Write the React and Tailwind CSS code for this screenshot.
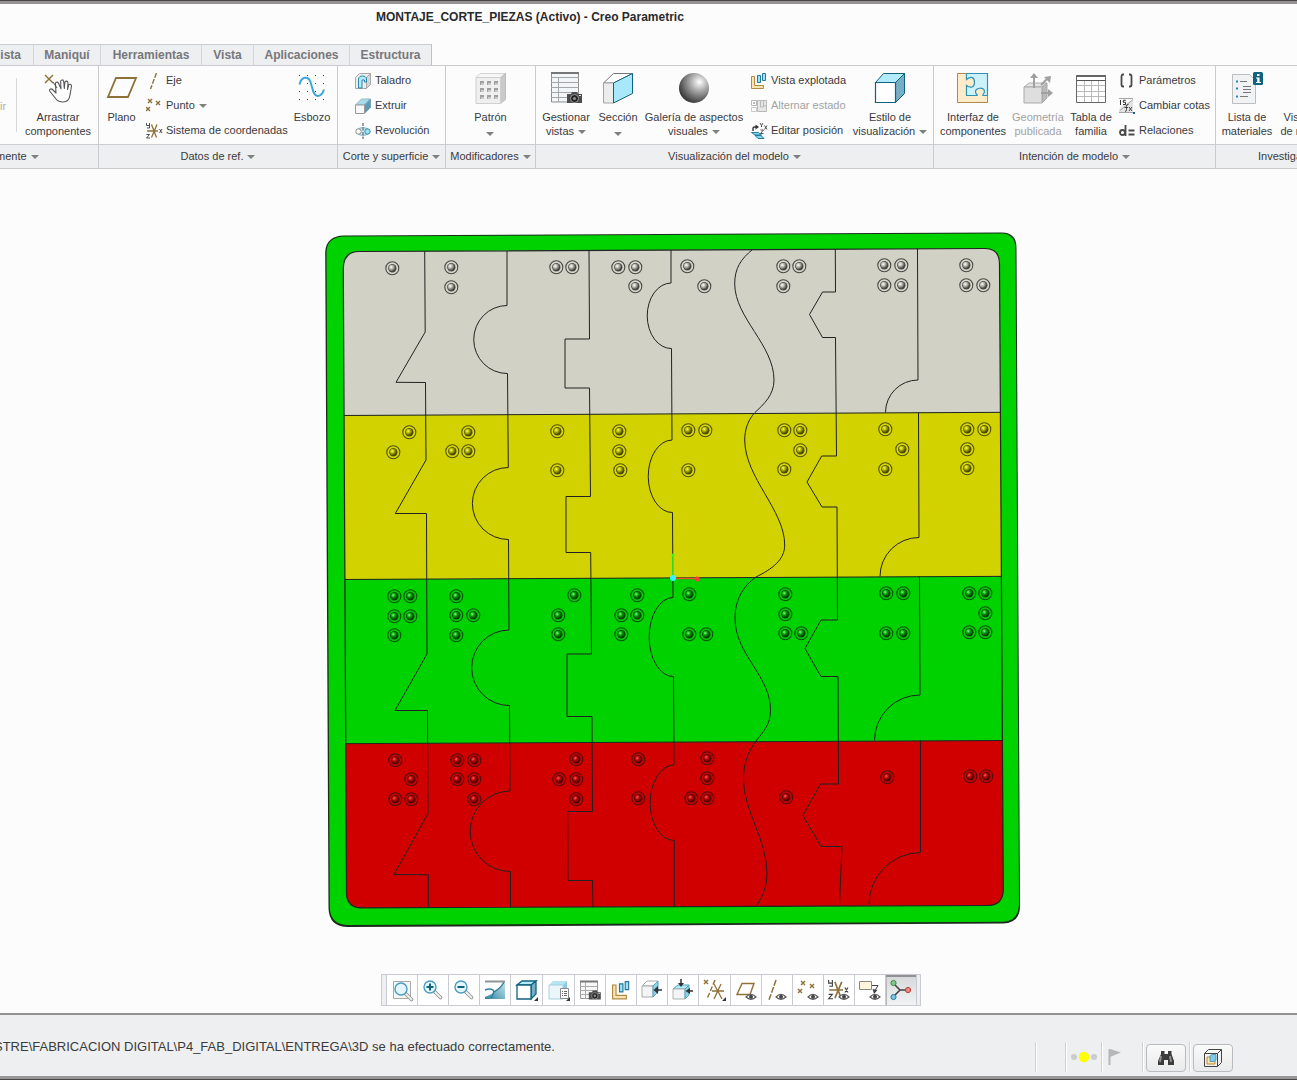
const BROWN = '#8f7038'
const TEAL = '#12627f'

function Icon({ w = 16, h = 16, children, className = 'shrink-0' }) {
  return (
    <svg width={w} height={h} viewBox={`0 0 ${w} ${h}`} fill="none" className={className} aria-hidden="true">
      {children}
    </svg>
  )
}

const Big = ({ children }) => <Icon w={32} h={32}>{children}</Icon>
const Bar = ({ children }) => <Icon w={24} h={24}>{children}</Icon>

function Caret({ className = '' }) {
  return (
    <svg width="8" height="4" viewBox="0 0 8 4" className={`inline-block shrink-0 ${className}`} aria-hidden="true">
      <path d="M0 0h8L4 4z" fill="#808080" />
    </svg>
  )
}

/* shared bits of the icons */
function Camera({ x, y }) {
  return (
    <g transform={`translate(${x} ${y})`}>
      <path d="M0 3h4l1-2h5l1 2h4v9H0z" fill="#4c4c4c" />
      <circle cx="7.500" cy="7.500" r="4" fill="#222" stroke="#9a9a9a" />
      <circle cx="7.500" cy="7.500" r="1.600" fill="#8e8e8e" />
      <path d="M12 4.500h2" stroke="#ddd" />
    </g>
  )
}

function Eye({ x, y }) {
  return (
    <g transform={`translate(${x} ${y})`}>
      <path d="M0 4Q5-1.500 10 4Q5 8.500 0 4z" fill="#fff" stroke="#5a5a5a" strokeWidth="1.200" />
      <circle cx="5" cy="3.700" r="2" fill="#444" />
    </g>
  )
}

function Cross({ x, y, s = 4 }) {
  return <path d={`M${x} ${y}l${s} ${s}m0 -${s}l-${s} ${s}`} stroke={BROWN} strokeWidth="1.400" />
}

function Corner() {
  return <path d="M23 19v4h-4z" fill="#333" />
}

function Axes() {
  return (
    <>
      <path d="M1 8h11M5.500 1.500l5 13M11 1.500l-5.500 13" stroke={BROWN} strokeWidth="1.300" />
      <path d="M.5 0v2.500h3M3.500 0v5H1M.5 11.500h3l-3 3.500h3.500M13.500 6l2.500 4m0-4l-2.500 4" stroke="#3f3f3f" strokeWidth="0.900" />
    </>
  )
}

const DragIcon = () => (
  <Big>
    <Cross x={3} y={3} s={8} />
    <path
      d="M14 21l-3.500-3.500c-1.500-1.500-4 0-2.500 2l6 7.500c2 2.500 4 3 7 3c5 0 6.500-3 7-7l1.500-9c0-2-2.500-2.500-3-.5l-1 4l.5-6.500c0-2.500-3-2.500-3.200 0l-.5 5.500l-.6-7c-.3-2.300-3.200-2-3.100.3l.4 7l-2.500-5.500c-1-2-3.700-1-3 1z"
      fill="#fff" stroke="#555" strokeWidth="1.100" strokeLinejoin="round"
    />
    <path d="M11 10l4 6" stroke="#555" />
  </Big>
)

const PlaneIcon = () => (
  <Big><path d="M10 6h20l-8 19H2z" stroke={BROWN} strokeWidth="1.800" /></Big>
)

const SketchIcon = () => (
  <Big>
    {[3, 11, 19, 27].map(y => (
      <path key={y} d={`M3 ${y}.5h1m7 0h1m7 0h1m7 0h1`} stroke="#333" />
    ))}
    <path d="M3.500 12.500C5 5 12 3 14.500 10S17 23.500 21.500 24Q26 24 28 17.500" stroke="#3ba7d8" strokeWidth="2" />
  </Big>
)

const PatternIcon = () => (
  <Big>
    <path d="M1 5.500l4-4h26l-4 4z" fill="#f6f6f6" stroke="#d2d2d2" />
    <path d="M30.500 1.500v26l-5 4v-26z" fill="#cacaca" stroke="#bdbdbd" />
    <path d="M1 5.500h24.500v26H1z" fill="#efefef" stroke="#cfcfcf" />
    {[9, 16, 23].map(y => <path key={y} d={`M5 ${y + 2}h4m3 0h4m3 0h4`} stroke="#9f9f9f" strokeWidth="4" />)}
    {[9, 16, 23].map(y => <path key={y} d={`M6 ${y + 3}h3m4 0h3m4 0h3`} stroke="#c9c9c9" strokeWidth="2" />)}
  </Big>
)

const ViewsIcon = () => (
  <Big>
    <path d="M1.500 1h27v29h-27z" fill="#f3f6f9" stroke="#8c8c8c" />
    <path d="M1 1h28" stroke="#777" strokeWidth="2" />
    <path d="M1 5.500h28M1 10.500h28M1 15.500h28M1 20.500h28M1 25.500h28M8.500 5v25" stroke="#a5a5a5" />
    <Camera x={17} y={19} />
  </Big>
)

const SectionIcon = () => (
  <Big>
    <path d="M1.500 11l10-9.500h19L11.500 11z" fill="#fff" stroke="#777" />
    <path d="M1.500 11h10v20h-10z" fill="#ececec" stroke="#a5a5a5" />
    <path d="M11.500 11l19-9.500v20L11.500 31z" fill="#a9e8fb" stroke={TEAL} />
  </Big>
)

const SphereIcon = () => (
  <Big>
    <defs>
      <radialGradient id="sphere" cx="0.68" cy="0.3" r="0.72">
        <stop offset="0" stopColor="#fff" />
        <stop offset="0.4" stopColor="#adadad" />
        <stop offset="1" stopColor="#3c3c3c" />
      </radialGradient>
    </defs>
    <circle cx="16" cy="16" r="15" fill="url(#sphere)" />
  </Big>
)

const StyleIcon = () => (
  <Big>
    <path d="M1.500 10.500l8-9h21l-9 9z" fill="#b2ecfb" stroke={TEAL} />
    <path d="M30.500 1.500v20l-9 9v-20z" fill="#76aec6" stroke={TEAL} />
    <path d="M1.500 10.500h20v20h-20z" fill="#fff" stroke={TEAL} strokeWidth="1.200" />
  </Big>
)

const PuzzleIcon = () => (
  <Big>
    <path d="M.5 1.500h30v29H.5z" fill="#fdebc9" />
    <path
      d="M9.500 1.500v6c5-4 8-2 8 3s-4 6-8 3v10h10c2 0 0-1-1-3c-1-5 9-6 9-1c0 2-3 4-1 4h4v-22z"
      fill="#cdf1fb" stroke="#2c93b5" strokeWidth="1.200"
    />
    <path d="M9.500 1.500H.5v29h30v-7" stroke="#b0884a" />
  </Big>
)

const GeometryIcon = () => (
  <Big>
    <path d="M2 15l5-4h18l-5 4z" fill="#e2e2e2" stroke="#b0b0b0" />
    <path d="M20 15l5-4v15l-5 5z" fill="#b9b9b9" stroke="#a6a6a6" />
    <path d="M2 15h18v16H2z" fill="#dedede" stroke="#aaa" />
    <path d="M12 16V5M19 13l7-7M19 21h9" stroke="#a0a0a0" strokeWidth="2" />
    <path d="M8 6l4-5 4 5zM22 5l7-1-1 7zM26 17l5 4-5 4z" fill="#a0a0a0" />
  </Big>
)

const TableIcon = () => (
  <Big>
    <path d="M1.500 3.500h29v27h-29z" fill="#fff" stroke="#666" />
    <path d="M1 4h30" stroke="#666" strokeWidth="2" />
    <path d="M1.500 8.500h29" stroke="#555" />
    <path d="M2 13.500h28M2 19.500h28M2 24.500h28M9.500 9v21M16.500 9v21M23.500 9v21" stroke="#b8b8b8" />
  </Big>
)

const ListIcon = () => (
  <Icon w={34} h={32}>
    <path d="M2.500 2.500h17l6 6v23h-23z" fill="#f1f2f3" stroke="#bdbdbd" />
    <path d="M6 9.500h2M6 16.500h2M6 24.500h2" stroke="#2088b8" strokeWidth="2" />
    <path d="M10 9.500h7M13 14.500h8M13 17.500h8M13 20.500h8M10 24.500h8" stroke="#777" />
    <rect x="23" y="0" width="10" height="13" rx="1.500" fill={TEAL} />
    <path d="M27 2h2.500v2H27zM26 5.500h3.500V10H31v1h-5v-1h1.300V6.500H26z" fill="#fff" />
  </Icon>
)

const AxisIcon = () => <Icon><path d="M10.500 0L4.500 16" stroke={BROWN} strokeWidth="1.400" strokeDasharray="5 1.500" /></Icon>
const PointIcon = () => <Icon><Cross x={2} y={1} /><Cross x={10} y={3} /><Cross x={0} y={9} /></Icon>
const CsysIcon = () => <Icon w={17}><Axes /></Icon>

const HoleIcon = () => (
  <Icon>
    <path d="M.5 4.500l4-4h11v11l-4 4H.5z" fill="#ededed" stroke="#a8a8a8" />
    <path d="M11.500 15.500l4-4V.5l-4 4z" fill="#d5d5d5" stroke="#a8a8a8" />
    <path d="M3.500 15V6c0-4 8-4 8 0v3H9.500V7H7v8z" fill="#b5eafa" stroke="#2a86a8" />
  </Icon>
)

const ExtrudeIcon = () => (
  <Icon>
    <path d="M.5 7l6-6h9l-6 6z" fill="#a5dbec" stroke="#9ab8c2" />
    <path d="M9.500 7l6-6v8.500l-6 6z" fill="#5a9cb8" stroke="#7aa5b5" />
    <path d="M.5 7h9v8.500h-9z" fill="#f8f8f8" stroke="#9a9a9a" />
  </Icon>
)

const RevolveIcon = () => (
  <Icon>
    <path d="M3.500 5.500q4.500-2 9 0v6q-4.500 2-9 0z" fill="#cdeef8" stroke="#7db4c8" />
    <circle cx="3.500" cy="8.500" r="2.700" fill="#fff" stroke="#8a8a8a" />
    <circle cx="12.500" cy="8.500" r="2.700" fill="#9fe2f7" stroke="#3787a5" />
    <path d="M8 0v16" stroke="#444" strokeDasharray="3 1.500" />
  </Icon>
)

const ExplodeShape = () => (
  <>
    <path d="M.5 3.500h3v9h9v3H.500z" fill="#fde3ae" stroke="#b08a45" />
    <path d="M6.500 2.500h3v7h-3zM11.500 .5h3v7h-3z" fill="#9fe2f7" stroke="#23799a" />
  </>
)
const ExplodeIcon = () => <Icon><ExplodeShape /></Icon>

const ToggleIcon = () => (
  <Icon w={17}>
    <path d="M.5 2.500h5v5h-5z" stroke="#b8b8b8" />
    <circle cx="3" cy="5" r="1" fill="#aaa" />
    <path d="M.5 9.500h5v4h-5z" stroke="#c8c8c8" />
    <path d="M6.500 2.500h9v11h-9z" fill="#e6e6e6" stroke="#b8b8b8" />
    <path d="M9.500 3v6h3V3M12.500 8h3" stroke="#b8b8b8" />
  </Icon>
)

const EditPosIcon = () => (
  <Icon w={17}>
    <path d="M.5 9.500h7l3 2.500H4zM4 12.500h6l3 3H7z" fill="#7fd2ec" stroke="#1c7597" strokeWidth="0.900" />
    <path d="M2 8V5.500q0-1.500 1.500-1.500H5" stroke="#333" strokeWidth="1.400" />
    <path d="M4.500 1.500L8 4 4.500 6.500z" fill="#333" />
    <path d="M9 0l1.500 2.500L12 0M10.500 2.500V4M13.500 2.500l2.500 4m0-4l-2.500 4M9.500 7h3L9.500 10.500h3" stroke="#3f3f3f" strokeWidth="0.900" />
  </Icon>
)

const ParamsIcon = () => (
  <Icon>
    <path d="M5 1.500H4q-1.500 0-1.500 2v8q0 2 1.500 2h1M10 1.500h1q1.500 0 1.500 2v8q0 2-1.500 2h-1" stroke="#4a4a4a" strokeWidth="1.800" />
  </Icon>
)

const DimsIcon = () => (
  <Icon>
    <path d="M.5 14.500V10L14 1v13.500z" fill="#e4e4e4" />
    <path d="M.5 13L14 1.500M0 14.500h14M0 .5h14" stroke="#a5a5a5" />
    <path d="M1.500 2v5M4 6.500h2.500V4.300H4.300V2.300h2.500" stroke="#333" />
    <path d="M9.500 6.500q-2-.5-2 2v3q0 2-1.500 2M5.500 9.500h3.500M10 9l3 4m0-4l-3 4" stroke="#333" strokeWidth="0.900" />
    <path d="M14 14h2v2h-2z" fill={TEAL} />
  </Icon>
)

const RelationsIcon = () => (
  <Icon>
    <circle cx="3.500" cy="9.500" r="2.500" stroke="#4a4a4a" strokeWidth="1.800" />
    <path d="M6.500 2v11M9.500 7.500h6M9.500 11.500h6" stroke="#4a4a4a" strokeWidth="1.800" />
  </Icon>
)

/* graphics toolbar icons */
const Lens = ({ x, y, children }) => (
  <g transform={`translate(${x} ${y})`}>
    <path d="M12 12l5.500 5.500" stroke="#8f8f8f" strokeWidth="3.600" strokeLinecap="round" />
    <path d="M12 12l5.500 5.500" stroke="#f2f2f2" strokeWidth="1.800" strokeLinecap="round" />
    <circle cx="7" cy="7" r="6" fill="#e4f6fc" stroke="#4a9cbf" strokeWidth="1.400" />
    {children}
  </g>
)

const FitIcon = () => (
  <Bar>
    <path d="M3.500 3.500h17v17h-17z" fill="#f6f6f6" stroke="#aaa" />
    <Lens x={4} y={4} />
  </Bar>
)
const ZoomInIcon = () => <Bar><Lens x={2} y={2}><path d="M7 3.500v7M3.500 7h7" stroke={TEAL} strokeWidth="2" /></Lens></Bar>
const ZoomOutIcon = () => <Bar><Lens x={2} y={2}><path d="M3.500 7h7" stroke={TEAL} strokeWidth="2" /></Lens></Bar>

const RepaintIcon = () => (
  <Bar>
    <defs>
      <linearGradient id="repaint" x1="0" x2="1" y1="1" y2="0">
        <stop offset="0" stopColor="#2e809f" />
        <stop offset="1" stopColor="#cdeaf4" />
      </linearGradient>
    </defs>
    <path d="M2 3h20v18H2z" fill="url(#repaint)" />
    <path d="M2 4h19C19 9 14 14 2 19z" fill="#fff" />
    <path d="M2 12q5-2 8 0q2 2-2 8" stroke="#2e809f" strokeWidth="1.500" />
    <path d="M21 4Q18 10 11 14" stroke="#2e809f" strokeWidth="1.500" />
    <path d="M2 3.500h20" stroke="#8c9498" strokeWidth="2" />
  </Bar>
)

const BoxIcon = () => (
  <Bar>
    <path d="M2 7l5-4h14l-5 4z" fill="#b2ecfb" stroke={TEAL} strokeWidth="1.300" />
    <path d="M21 3v13l-5 5V7z" fill="#76aec6" stroke={TEAL} strokeWidth="1.300" />
    <path d="M2 7h14v14H2z" fill="#fff" stroke={TEAL} strokeWidth="1.300" />
    <Corner />
  </Bar>
)

const BoxListIcon = () => (
  <Bar>
    <path d="M2 7l4-4h14l-4 4z" fill="#b5e4f2" />
    <path d="M20 3v14l-4 3V7z" fill="#8cc8de" />
    <path d="M2 7h14v14H2z" fill="#eaf6fa" stroke="#a8cfdd" />
    <path d="M13.500 10.500h8v10h-8z" fill="#fff" stroke="#8a8a8a" />
    <path d="M15 13.500h1m1 0h3m-5 2h1m1 0h3m-5 2h1m1 0h3" stroke="#666" />
    <Corner />
  </Bar>
)

const SavedIcon = () => (
  <Bar>
    <path d="M2.500 3.500h17v17h-17z" fill="#f7f7f7" stroke="#999" />
    <path d="M2 3.500h18" stroke="#777" strokeWidth="2" />
    <path d="M2 8.500h18M2 12.500h18M2 16.500h18M7.500 4v17" stroke="#aaa" />
    <g transform="translate(10 11) scale(.8)"><Camera x={1} y={1} /></g>
  </Bar>
)
const ExplodeBarIcon = () => <Bar><g transform="translate(3 3) scale(1.150)"><ExplodeShape /></g></Bar>

const ClipFrontIcon = () => (
  <Bar>
    <path d="M2 8l5-5h11l-5 5z" fill="#fff" stroke="#aaa" />
    <path d="M2 8h11v11H2z" fill="#f4f4f4" stroke="#aaa" />
    <path d="M13 8l5-5v11l-5 5z" fill="#8fd3ea" stroke="#4fa2c0" />
    <path d="M16 12h6" stroke="#333" strokeWidth="1.500" />
    <path d="M18 8v8l-4.500-4z" fill="#333" />
  </Bar>
)
const ClipTopIcon = () => (
  <Bar>
    <path d="M2 11l5-4h11l-4 4z" fill="#b2ecfb" stroke="#4fa2c0" />
    <path d="M2 11h12v10H2z" fill="#f4f4f4" stroke="#b5b5b5" />
    <path d="M14 11l4-4v10l-4 4z" fill="#8fd3ea" stroke="#4fa2c0" />
    <path d="M10 1v5M17 13h5" stroke="#333" strokeWidth="1.500" />
    <path d="M7 5h6l-3 4zM19 10v6l-4.500-3z" fill="#333" />
  </Bar>
)
const DatumIcon = () => (
  <Bar>
    <Cross x={1} y={2} />
    <path d="M12 2L4 21" stroke={BROWN} strokeWidth="1.400" strokeDasharray="5 2" />
    <path d="M9 13h12M11 6l8 15M18 6l-7 15" stroke={BROWN} strokeWidth="1.300" />
    <Corner />
  </Bar>
)
const PlaneEyeIcon = () => <Bar><path d="M8 5.500h12l-4 11H3z" stroke={BROWN} strokeWidth="1.400" /><Eye x={12} y={15} /></Bar>
const AxisEyeIcon = () => (
  <Bar><path d="M11 2L4 22" stroke={BROWN} strokeWidth="1.500" strokeDasharray="6 1.500" /><Eye x={11} y={15} /></Bar>
)
const PointEyeIcon = () => <Bar><Cross x={5} y={3} /><Cross x={14} y={6} /><Cross x={2} y={11} /><Eye x={12} y={15} /></Bar>
const CsysEyeIcon = () => <Bar><g transform="translate(1 2) scale(1.250)"><Axes /></g><Eye x={12} y={15} /></Bar>
const NoteIcon = () => (
  <Bar>
    <path d="M1.500 3.500h12v8h-12z" fill="#fff4dc" stroke="#888" />
    <path d="M14 7.500h6l-3 5" stroke="#444" />
    <path d="M14.500 11l5 1-3.500 4z" fill="#444" />
    <Eye x={12} y={15} />
  </Bar>
)
const SpinIcon = () => (
  <Bar>
    <path d="M4 5l7 7h9M11 12l-7 7" stroke="#444" strokeWidth="1.600" />
    <circle cx="4.500" cy="5" r="2.600" fill="#7fc98a" stroke="#3e8a49" />
    <circle cx="19" cy="12" r="2.600" fill="#f08a80" stroke="#b93a32" />
    <circle cx="4.500" cy="19" r="2.600" fill="#7fc4de" stroke="#2b7b9d" />
  </Bar>
)

const TOOLS = [
  { name: 'Reajustar', icon: FitIcon },
  { name: 'Ampliar', icon: ZoomInIcon },
  { name: 'Reducir', icon: ZoomOutIcon },
  { name: 'Redibujar', icon: RepaintIcon },
  { name: 'Estilo de visualización', icon: BoxIcon, menu: true },
  { name: 'Orientaciones guardadas', icon: BoxListIcon, menu: true },
  { name: 'Gestor de vistas', icon: SavedIcon },
  { name: 'Vista explotada', icon: ExplodeBarIcon },
  { name: 'Recorte frontal', icon: ClipFrontIcon },
  { name: 'Recorte superior', icon: ClipTopIcon },
  { name: 'Filtros de referencias', icon: DatumIcon, menu: true },
  { name: 'Mostrar planos', icon: PlaneEyeIcon },
  { name: 'Mostrar ejes', icon: AxisEyeIcon },
  { name: 'Mostrar puntos', icon: PointEyeIcon },
  { name: 'Mostrar sistemas de coordenadas', icon: CsysEyeIcon },
  { name: 'Mostrar anotaciones', icon: NoteIcon },
  { name: 'Centro de giro', icon: SpinIcon, active: true },
]

const TABS = [
  { label: 'ista', width: 'w-[34px] justify-end pr-3' },
  { label: 'Maniquí', width: 'w-[67px] justify-center' },
  { label: 'Herramientas', width: 'w-[101px] justify-center' },
  { label: 'Vista', width: 'w-[52px] justify-center' },
  { label: 'Aplicaciones', width: 'w-[96px] justify-center' },
  { label: 'Estructura', width: 'w-[82px] justify-center' },
]

function BigButton({ icon: I, lines, menu, width, disabled }) {
  return (
    <button disabled={disabled} className={`flex shrink-0 flex-col items-center pt-1.5 ${width} ${disabled ? 'text-[#a3a3a3]' : ''}`}>
      <I />
      <span className="mt-1.5 block whitespace-nowrap text-center leading-[14px]">
        {lines.map((line, i) => (
          <span key={line} className="block">
            {line}
            {menu && i === 1 && <Caret className="ml-1 align-middle" />}
          </span>
        ))}
        {menu && lines.length === 1 && <Caret className="mx-auto mt-1 block" />}
      </span>
    </button>
  )
}

function SmallButton({ icon: I, label, menu, disabled }) {
  return (
    <button disabled={disabled} className={`flex h-[25px] items-center whitespace-nowrap ${disabled ? 'text-[#a3a3a3]' : ''}`}>
      <span className="flex w-5 shrink-0"><I /></span>
      {label}
      {menu && <Caret className="ml-1" />}
    </button>
  )
}

function SmallColumn({ className = '', children }) {
  return <div className={`flex shrink-0 flex-col items-start pt-0.5 ${className}`}>{children}</div>
}

function Group({ label, width, labelClass = 'justify-center', bodyClass = '', children }) {
  return (
    <section className={`flex flex-col overflow-hidden border-[#c9cbcf] ${width}`}>
      <div className={`flex h-[78px] ${bodyClass}`}>{children}</div>
      <button className={`flex h-6 items-center gap-1 whitespace-nowrap border-t border-[#c9cbcf] bg-[#edeff1] ${labelClass}`}>
        {label}
        <Caret />
      </button>
    </section>
  )
}

const ROWS = [
  {
    id: 'white', light: '#ffffff', mid: '#b4b4a8', dark: '#3a3b36', line: '#2e302b', ring: '#d6d6cc',
    studs: [
      [392, 268], [451, 267], [451, 287], [556, 267], [572, 267], [618, 267], [635, 267], [635, 286],
      [687, 266], [704, 286], [783, 266], [799, 266], [783, 286], [884, 265], [901, 265], [884, 285],
      [901, 285], [966, 265], [966, 285], [983, 285],
    ],
  },
  {
    id: 'yellow', light: '#ffff55', mid: '#b0b000', dark: '#3e3e00', line: '#3a3a0a', ring: '#d8d804',
    studs: [
      [409, 432], [393, 452], [468, 432], [452, 451], [468, 451], [557, 431], [557, 470], [619, 431],
      [619, 451], [620, 470], [688, 430], [705, 430], [688, 470], [784, 430], [800, 430], [800, 450],
      [784, 469], [885, 429], [902, 449], [885, 469], [967, 429], [984, 429], [967, 449], [967, 468],
    ],
  },
  {
    id: 'green', light: '#7dff7d', mid: '#08a008', dark: '#033803', line: '#0a400c', ring: '#04c804',
    studs: [
      [394, 596], [410, 596], [394, 616], [410, 616], [394, 635], [456, 596], [456, 615], [473, 615],
      [456, 635], [574, 595], [558, 615], [558, 634], [637, 595], [621, 615], [637, 615], [621, 634],
      [689, 594], [689, 634], [706, 634], [785, 594], [785, 614], [785, 633], [801, 633], [886, 593],
      [903, 593], [886, 633], [903, 633], [969, 593], [985, 593], [985, 613], [969, 632], [985, 632],
    ],
  },
  {
    id: 'red', light: '#ff5c5c', mid: '#b80404', dark: '#4a0303', line: '#3c1010', ring: '#c40303',
    studs: [
      [395, 760], [411, 779], [395, 799], [411, 799], [457, 760], [474, 760], [457, 779], [474, 779],
      [474, 799], [576, 759], [559, 779], [576, 779], [576, 799], [638, 759], [638, 798], [707, 758],
      [707, 778], [691, 798], [707, 798], [786, 797], [887, 777], [970, 776], [986, 776],
    ],
  },
]

const CUTS = [
  'M424.700 251L425.200 332L396 382.300L425.500 382.500L426 460L395.300 513.500H426.500L427 654L395 710.500H427.500L428 813.500L394 874.500L428.300 874.800V907',
  'M507 251V305.500A33.500 34 0 0 0 507.500 373.500L508.300 467.500A36 36 0 0 0 508.500 539.500L509 630A37.500 37.700 0 0 0 509.500 705.500L510 791A40 40.200 0 0 0 510.500 871.500V907',
  'M589 250L589.500 339H565V388H589.500L590.500 496.500H566V552.500H590.700L591.500 654H567V716.500H592L592.500 811.500H567.700L568 880.500H592.500L593 907',
  'M671 250V283A24 32.700 0 0 0 671.500 348.500L672 440A24 36.200 0 0 0 672.500 512.500L673 597.500A24 39.400 0 0 0 673.500 676.500L674 765A24 37.700 0 0 0 674.300 840.500V906',
  'M752.500 249.500C741 259 734.700 268 734.700 284C735 318 774 345 774 380C774 395 764 404 754.500 413C748 420 744.700 430 744.700 440C745 478 784.700 510 784.700 545C784.700 560 772 569 756 577C743 586 735 600 735 618C735 655 770.500 675 770.500 710C770.500 725 763 732 756 741C748 752 743.500 763 743.500 780C743.500 810 767 840 767 873C767 888 762 897 757 905',
  'M835.300 249L835.500 292H822.500L809.500 314.500L822.500 337.500H835.500L836.500 456H821.700L807 482L822 507H837L837.500 620H821L805 648.500L821 676.500H838L838.500 784H820.500L803 815.500L821 846.500H842L839.500 904',
  'M917.500 248.500L918 380A32.500 32.500 0 0 0 885.500 412.500M918.500 412.500L919 537.500A39 39 0 0 0 880 576.500M919.500 576.500L920 695A45.500 45.500 0 0 0 874.500 740.500M920.500 740.500V852.500A52 52 0 0 0 869 904.500',
]

const PLATE = 'M343.300 269Q343.300 251.500 359 251.500L985 248.500Q999.500 248.500 999.500 264L1003.300 889Q1003.300 905.300 988 905.500L362 907.800Q346.700 907.800 346.500 893Z'

function Board() {
  return (
    <svg viewBox="320 225 705 710" width="705" height="710" className="shrink-0" role="img" aria-label="Montaje">
      <defs>
        <clipPath id="plate"><path d={PLATE} /></clipPath>
        {ROWS.map(r => (
          <radialGradient key={r.id} id={`stud-${r.id}`} cx="0.36" cy="0.34" r="0.68">
            <stop offset="0" stopColor={r.light} />
            <stop offset="0.45" stopColor={r.mid} />
            <stop offset="1" stopColor={r.dark} />
          </radialGradient>
        ))}
      </defs>
      {/* frame, with its dark lower edge behind */}
      <path d="M325.200 252Q326 236 344 235.500L1002 232.500Q1016.500 232.500 1016.500 248L1020 906Q1020 923 1003 923.500L350 927Q329 928 328.500 908Z" fill="#1b2a1b" />
      <path d="M326.500 252Q327 237 344 236.500L1002 233.500Q1015.500 234 1015.500 249L1019 905Q1018 921.500 1003 921.700L347 925Q330.500 924 329.800 908Z" fill="#00d200" />
      <g clipPath="url(#plate)">
        <path d="M340 240H1010V412.300L340 415.500z" fill="#d1d1c6" />
        <path d="M340 415.500L1010 412.300V576.300L340 579.500z" fill="#d2d200" />
        <path d="M340 579.500L1010 576.300V740.500L340 743.700z" fill="#00d200" />
        <path d="M340 743.700L1010 740.500V915H340z" fill="#d00000" />
        <path d="M340 415.500L1010 412.300M340 579.500L1010 576.300M340 743.700L1010 740.500" stroke="#222" />
      </g>
      <path d={PLATE} fill="none" stroke="#222" strokeWidth="1.200" />
      {CUTS.map(d => <path key={d} d={d} fill="none" stroke="#222" />)}
      {ROWS.map(r => r.studs.map(([x, y]) => (
        <g key={`${x}-${y}`}>
          <circle cx={x + 0.3} cy={y + 0.3} r="6.500" fill={r.ring} stroke={r.line} strokeWidth="1.100" strokeOpacity="0.850" />
          <circle cx={x + 0.3} cy={y + 0.3} r="4.200" fill={r.dark} opacity="0.850" />
          <circle cx={x + 0.2} cy={y + 0.2} r="3.400" fill={`url(#stud-${r.id})`} />
        </g>
      )))}
      {/* spin centre */}
      <path d="M673 578V556" stroke="#2cff2c" strokeWidth="1.500" />
      <path d="M673 578.500H696" stroke="#e0562c" strokeWidth="1.500" />
      <circle cx="673" cy="555" r="1.500" fill="#2cff2c" />
      <circle cx="697" cy="579" r="2.500" fill="#ff3b3b" />
      <circle cx="673" cy="578" r="3" fill="#34f4ff" />
    </svg>
  )
}

function Divider({ className = '' }) {
  return <span className={`h-[30px] w-0.5 shrink-0 border-l border-r border-l-[#cfd1d3] border-r-white ${className}`} />
}

export default function App() {
  return (
    <div className="flex min-h-screen flex-col overflow-hidden bg-[#fcfcfc] font-['Liberation_Sans',Arial,sans-serif] text-[11px] text-[#3a3a3c]">
      <header className="h-11 border-t border-[#4a4648]">
        <div className="h-[3px] bg-[#969294]" />
        <h1 className="whitespace-nowrap pl-[376px] pt-1.5 text-[12px] font-bold leading-[14px] text-[#2a2a2c]">
          MONTAJE_CORTE_PIEZAS (Activo) - Creo Parametric
        </h1>
      </header>

      <nav className="flex h-[22px] border-b border-[#c9cbcf]">
        {TABS.map(t => (
          <button
            key={t.label}
            className={`flex shrink-0 items-center border-r border-t border-r-[#d3d5d8] border-t-[#c9cbcf] bg-[#edeff1] text-[12px] font-bold text-[#77777c] last:border-r-[#bfc1c5] ${t.width}`}
          >
            {t.label}
          </button>
        ))}
      </nav>

      <div className="flex overflow-hidden border-b border-[#c9cbcf]">
        <Group label="mente" width="w-[99px] shrink-0 border-r" labelClass="-ml-1 justify-start">
          <span className="mt-[34px] w-4 shrink-0 leading-[12px] text-[#b5ada0]">ir</span>
          <span className="my-3 w-px shrink-0 bg-[#d5d7da]" />
          <BigButton icon={DragIcon} lines={['Arrastrar', 'componentes']} width="w-[82px]" />
        </Group>

        <Group label="Datos de ref." width="w-[239px] shrink-0 border-r">
          <BigButton icon={PlaneIcon} lines={['Plano']} width="w-[45px]" />
          <SmallColumn className="ml-0.5 w-[144px]">
            <SmallButton icon={AxisIcon} label="Eje" />
            <SmallButton icon={PointIcon} label="Punto" menu />
            <SmallButton icon={CsysIcon} label="Sistema de coordenadas" />
          </SmallColumn>
          <BigButton icon={SketchIcon} lines={['Esbozo']} width="w-[44px]" />
        </Group>

        <Group label="Corte y superficie" width="w-[108px] shrink-0 border-r">
          <SmallColumn className="ml-[17px]">
            <SmallButton icon={HoleIcon} label="Taladro" />
            <SmallButton icon={ExtrudeIcon} label="Extruir" />
            <SmallButton icon={RevolveIcon} label="Revolución" />
          </SmallColumn>
        </Group>

        <Group label="Modificadores" width="w-[90px] shrink-0 border-r" bodyClass="justify-center">
          <BigButton icon={PatternIcon} lines={['Patrón']} menu width="w-[60px]" />
        </Group>

        <Group label="Visualización del modelo" width="w-[398px] shrink-0 border-r" bodyClass="pl-1">
          <BigButton icon={ViewsIcon} lines={['Gestionar', 'vistas']} menu width="w-[52px]" />
          <BigButton icon={SectionIcon} lines={['Sección']} menu width="w-[52px]" />
          <BigButton icon={SphereIcon} lines={['Galería de aspectos', 'visuales']} menu width="w-[100px]" />
          <SmallColumn className="ml-[7px] w-[99px]">
            <SmallButton icon={ExplodeIcon} label="Vista explotada" />
            <SmallButton icon={ToggleIcon} label="Alternar estado" disabled />
            <SmallButton icon={EditPosIcon} label="Editar posición" />
          </SmallColumn>
          <BigButton icon={StyleIcon} lines={['Estilo de', 'visualización']} menu width="w-[80px]" />
        </Group>

        <Group label="Intención de modelo" width="w-[282px] shrink-0 border-r" bodyClass="pl-1">
          <BigButton icon={PuzzleIcon} lines={['Interfaz de', 'componentes']} width="w-[70px]" />
          <BigButton icon={GeometryIcon} lines={['Geometría', 'publicada']} width="w-[60px]" disabled />
          <BigButton icon={TableIcon} lines={['Tabla de', 'familia']} width="w-[46px]" />
          <SmallColumn className="ml-[5px]">
            <SmallButton icon={ParamsIcon} label="Parámetros" />
            <SmallButton icon={DimsIcon} label="Cambiar cotas" />
            <SmallButton icon={RelationsIcon} label="Relaciones" />
          </SmallColumn>
        </Group>

        <Group label="Investigar" width="min-w-0 flex-1" labelClass="justify-start pl-[42px]">
          <BigButton icon={ListIcon} lines={['Lista de', 'materiales']} width="w-[62px]" />
          <BigButton icon={() => <Big />} lines={['Visor', 'de ref.']} width="ml-0.5" />
        </Group>
      </div>

      <main className="flex flex-1 flex-col">
        <div className="flex flex-1 justify-center pl-12 pt-14">
          <Board />
        </div>
        <div className="mb-[7px] flex justify-center pl-[5px]">
          <div role="toolbar" className="flex h-8 border border-[#c9cbd0] bg-white">
            <span className="w-[5px] border-r border-[#c9cbd0] bg-[#edeff1]" />
            {TOOLS.map(({ name, icon: I, menu, active }) => (
              <button
                key={name}
                aria-label={name}
                className={`flex items-center justify-center border-r border-[#c9cbd0] ${menu ? 'w-8' : 'w-[31px]'} ${
                  active ? 'bg-linear-to-b from-[#d5d7da] to-[#f2f3f4] shadow-[inset_0_2px_0_#8f9194,inset_1px_0_0_#b5b7ba]' : ''
                }`}
              >
                <I />
              </button>
            ))}
            <span className="w-[3px] bg-[#edeff1]" />
          </div>
        </div>
      </main>

      <footer className="flex h-[67px] shrink-0 justify-between border-b border-t-2 border-b-[#4a4648] border-t-[#939393] bg-[#edeff1] shadow-[inset_0_-3px_0_#969696]">
        <p className="-ml-1.5 whitespace-nowrap pt-6 text-[13px] leading-[16px]">
          STRE\FABRICACION DIGITAL\P4_FAB_DIGITAL\ENTREGA\3D se ha efectuado correctamente.
        </p>
        <div className="mr-16 flex items-start pt-[27px]">
          <Divider className="mr-7" />
          <Divider />
          <Icon w={34} h={30}>
            <circle cx="7" cy="15" r="3" fill="#c9cbcd" />
            <circle cx="17" cy="15" r="5.300" fill="#ffff00" />
            <circle cx="27" cy="15" r="3" fill="#c9cbcd" />
          </Icon>
          <Divider />
          <Icon w={39} h={30}>
            <path d="M6.500 7v16" stroke="#b5b7b9" strokeWidth="2" />
            <path d="M7 7l11 3.500L7 15z" fill="#b5b7b9" />
          </Icon>
          <Divider />
          <button aria-label="Buscar" className="ml-0.5 mt-0.5 flex h-7 w-10 items-center justify-center rounded-sm border border-[#b9bbbe] bg-linear-to-b from-[#fafafa] to-[#e9eaeb]">
            <Icon w={18} h={16}>
              <path d="M4 1h3.500v3H11V1h3.500v3l2.500 7v4h-6v-5H7v5H1v-4l3-7z" fill="#3b3b3b" />
              <path d="M4 6L3 12M13 6l1 6" stroke="#8d8d8d" strokeWidth="2" />
            </Icon>
          </button>
          <Divider className="ml-[3px]" />
          <button aria-label="Filtro de selección" className="ml-0.5 mt-0.5 flex h-7 w-10 items-center justify-center rounded-sm border border-[#b9bbbe] bg-linear-to-b from-[#fafafa] to-[#e9eaeb]">
            <Icon w={18} h={18}>
              <path d="M.5 4.500h13v13H.500zM.5 4.500l4-4h13v13l-4 4M13.500 4.500l4-4" stroke="#444" />
              <path d="M3 8h8v7H3z" fill="#fde3ae" stroke="#c08a35" />
              <path d="M6 7l2-1.500h4V11l-2 1.500H6z" fill="#7ccbe6" stroke="#3a94b5" strokeWidth="0.800" />
            </Icon>
          </button>
        </div>
      </footer>
    </div>
  )
}
